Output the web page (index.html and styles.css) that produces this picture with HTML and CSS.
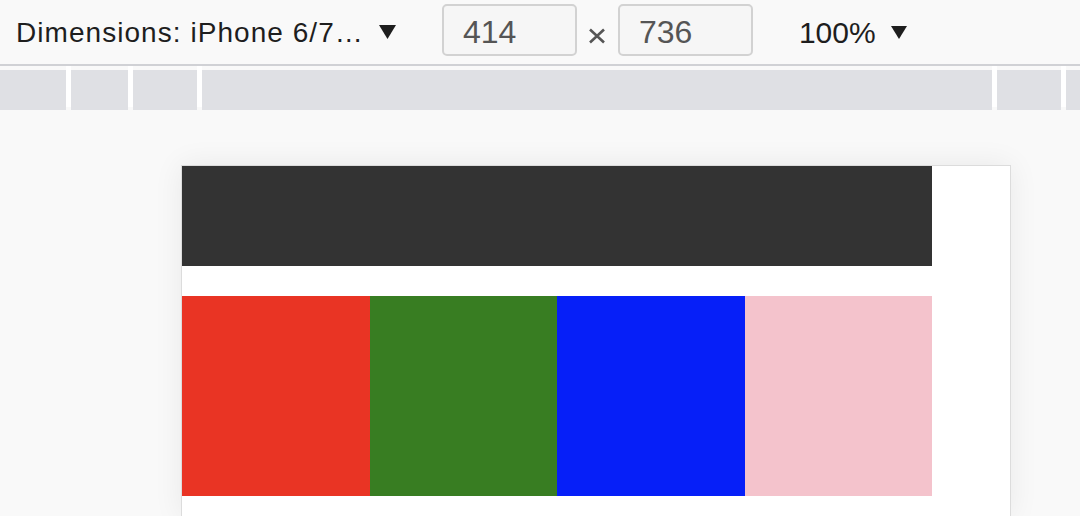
FILE: index.html
```html
<!DOCTYPE html>
<html>
<head>
<meta charset="utf-8">
<link rel="stylesheet" href="styles.css">
</head>
<body>
<div class="toolbar">
  <div class="device">
    <span class="label">Dimensions: iPhone 6/7…</span>
    <svg class="tri" width="17" height="14" viewBox="0 0 17 14"><polygon points="0,0 17,0 8.5,14" fill="#1e1e1e"/></svg>
  </div>
  <div class="dims">
    <div class="field">414</div>
    <span class="times"><svg width="18" height="16" viewBox="0 0 18 16"><path d="M2 1.5 L16 14.5 M16 1.5 L2 14.5" stroke="#555" stroke-width="2.6" fill="none"/></svg></span>
    <div class="field">736</div>
  </div>
  <div class="zoom">
    <span class="zlabel">100%</span>
    <svg class="tri" width="16" height="13" viewBox="0 0 16 13"><polygon points="0,0 16,0 8,13" fill="#1e1e1e"/></svg>
  </div>
</div>
<div class="ruler">
  <div class="seg s1"></div><div class="sep"></div>
  <div class="seg s2"></div><div class="sep"></div>
  <div class="seg s3"></div><div class="sep"></div>
  <div class="seg s4"></div><div class="sep"></div>
  <div class="seg s5"></div><div class="sep"></div>
  <div class="seg s6"></div>
</div>
<div class="stage">
  <div class="frame">
    <div class="header"></div>
    <div class="swatches">
      <div class="sw red"></div>
      <div class="sw green"></div>
      <div class="sw blue"></div>
      <div class="sw pink"></div>
    </div>
  </div>
</div>
</body>
</html>
```
FILE: styles.css
```css
html, body {
  margin: 0;
  padding: 0;
  height: 100%;
  overflow: hidden;
}
body {
  background: #f9f9f9;
  font-family: "Liberation Sans", Arial, sans-serif;
  color: #1e1e1e;
}
.toolbar {
  height: 64px;
  display: flex;
  align-items: center;
  border-bottom: 2px solid #d0d1d5;
  background: #f9f9f9;
}
.device {
  display: flex;
  align-items: center;
  padding-left: 16px;
  gap: 15px;
}
.label {
  font-size: 28px;
  letter-spacing: 1.05px;
  line-height: 1;
  padding-top: 2px;
}
.tri {
  display: block;
}
.dims {
  display: flex;
  align-items: center;
  margin-left: 46px;
}
.field {
  box-sizing: border-box;
  width: 135px;
  height: 52px;
  border: 2px solid #d2d2d2;
  border-radius: 5px;
  background: #f6f6f6;
  color: #555;
  font-size: 32px;
  line-height: 48px;
  padding-top: 2px;
  padding-left: 19px;
  margin-top: -4px;
}
.times {
  width: 41px;
  display: flex;
  justify-content: center;
  padding-top: 8px;
}
.times svg {
  display: block;
}
.zoom {
  display: flex;
  align-items: center;
  margin-left: 46px;
  gap: 15px;
}
.zlabel {
  font-size: 30px;
  line-height: 1;
  padding-top: 2px;
}
.ruler {
  display: flex;
  height: 44px;
}
.seg {
  margin-top: 4px;
  height: 40px;
  background: #dfe0e4;
}
.sep {
  width: 5px;
  height: 41px;
  background: #ffffff;
}
.s1 { width: 66px; }
.s2 { width: 57px; }
.s3 { width: 64px; }
.s4 { width: 790px; }
.s5 { width: 64px; }
.s6 { flex: 1; }
.stage {
  padding: 55px 0 0 181px;
}
.frame {
  width: 828px;
  height: 351px;
  background: #ffffff;
  border: 1px solid #dcdcdc;
  border-bottom: none;
  box-shadow: 0 0 28px rgba(0, 0, 0, 0.07);
}
.header {
  width: 750px;
  height: 100px;
  background: #333333;
  margin-bottom: 30px;
}
.swatches {
  display: flex;
  width: 750px;
  height: 200px;
}
.sw {
  flex: 1;
}
.red { background: #e93424; }
.green { background: #387d22; }
.blue { background: #061ff8; }
.pink { background: #f4c3cc; }
```
